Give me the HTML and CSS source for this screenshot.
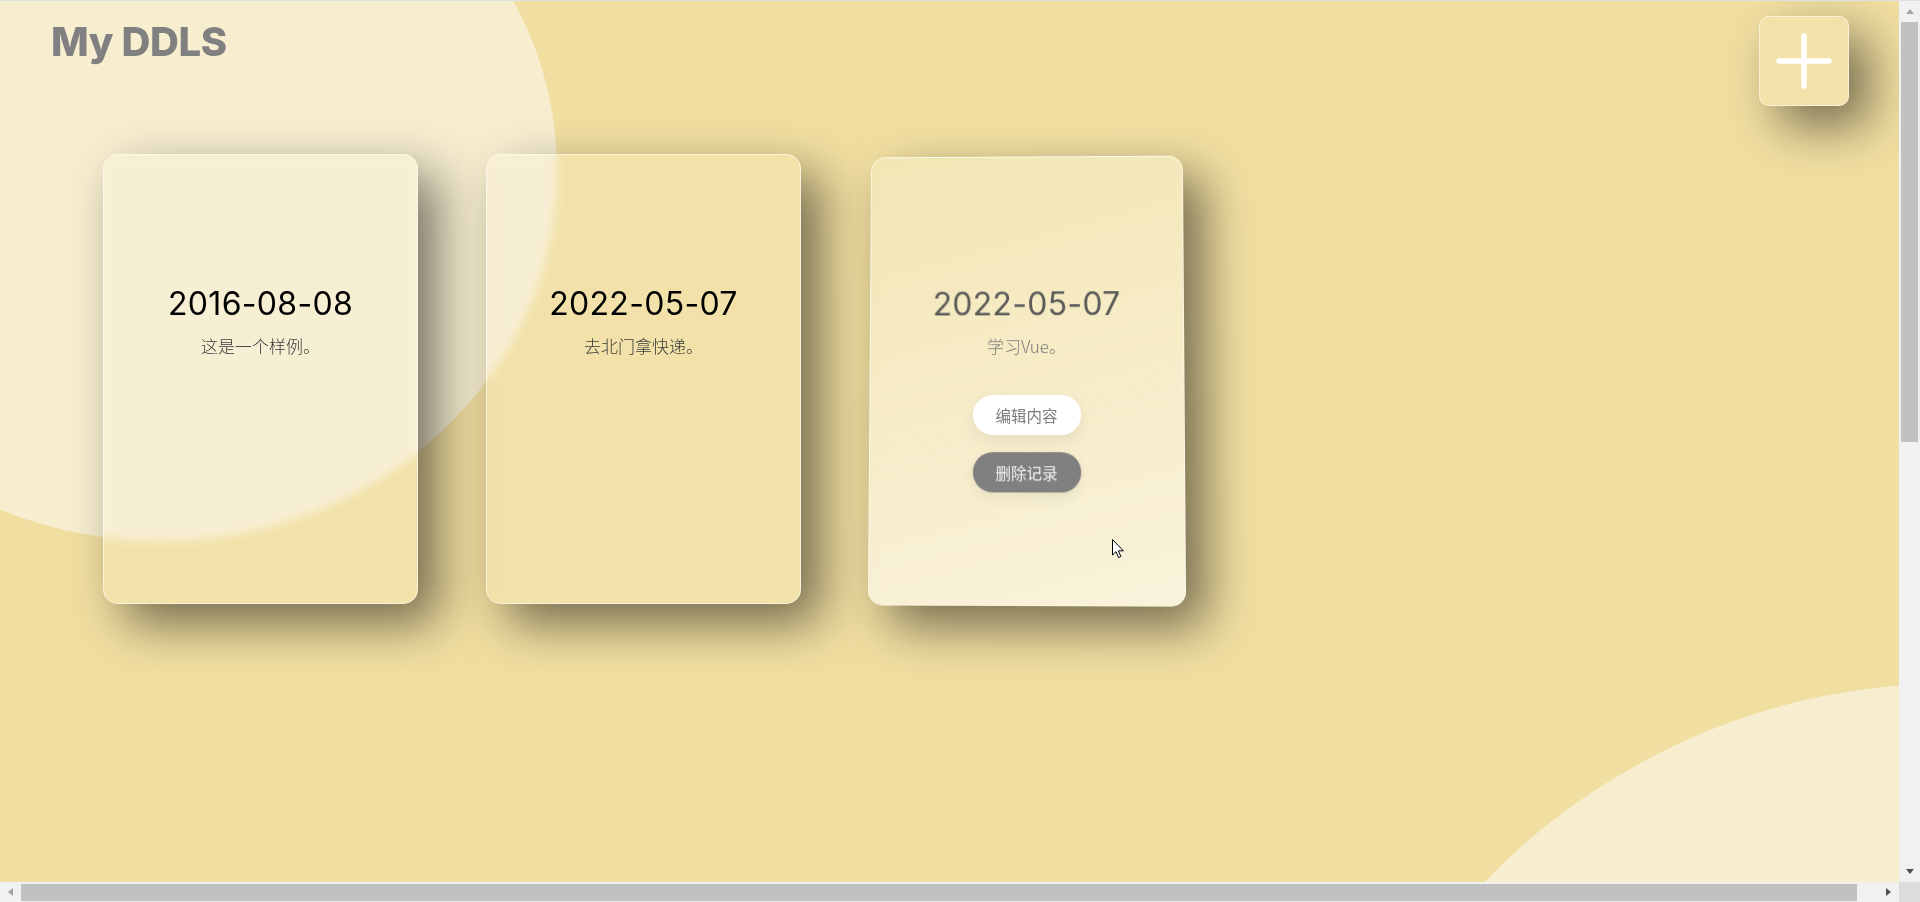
FILE: index.html
```html
<!DOCTYPE html>
<html lang="zh-CN">
<head>
<meta charset="utf-8">
<title>My DDLS</title>
<link rel="stylesheet" href="styles.css">
</head>
<body>
<div class="page">
  <div class="blob blob-tl"></div>
  <div class="blob blob-br"></div>

  <header class="top">
    <h1 class="title">My DDLS</h1>
    <button class="add" aria-label="添加">
      <svg width="56" height="56" viewBox="0 0 56 56">
        <path d="M28 3 V53 M3 28 H53" stroke="#fff" stroke-width="5.5" stroke-linecap="round" fill="none"/>
      </svg>
    </button>
  </header>

  <main class="cards">
    <article class="card">
      <div class="content">
        <h2 class="date">2016-08-08</h2>
        <p class="desc">这是一个样例。</p>
        <div class="actions hidden">
          <button class="btn btn-edit">编辑内容</button>
          <button class="btn btn-del">删除记录</button>
        </div>
      </div>
    </article>
    <article class="card">
      <div class="content">
        <h2 class="date">2022-05-07</h2>
        <p class="desc">去北门拿快递。</p>
        <div class="actions hidden">
          <button class="btn btn-edit">编辑内容</button>
          <button class="btn btn-del">删除记录</button>
        </div>
      </div>
    </article>
    <article class="card card-active">
      <div class="content">
        <h2 class="date">2022-05-07</h2>
        <p class="desc">学习Vue。</p>
        <div class="actions">
          <button class="btn btn-edit">编辑内容</button>
          <button class="btn btn-del">删除记录</button>
        </div>
      </div>
    </article>
  </main>

  <svg class="cursor" width="13" height="20" viewBox="0 0 13 20">
    <path d="M0.5 0.5 L0.5 16 L4 12.6 L6.6 18.6 L8.9 17.6 L6.4 11.8 L11.4 11.8 Z" fill="#fff" stroke="#000" stroke-width="1" stroke-linejoin="miter"/>
  </svg>
</div>

<div class="frame-line" aria-hidden="true"></div>
<div class="sb sb-v" aria-hidden="true">
  <span class="sb-btn"><i class="tri tri-up"></i></span>
  <span class="sb-track"><span class="sb-thumb"></span></span>
  <span class="sb-btn"><i class="tri tri-down"></i></span>
</div>
<div class="sb sb-h" aria-hidden="true">
  <span class="sb-btn"><i class="tri tri-left"></i></span>
  <span class="sb-track"><span class="sb-thumb"></span></span>
  <span class="sb-btn"><i class="tri tri-right"></i></span>
</div>
<div class="sb-corner" aria-hidden="true"></div>
</body>
</html>
```

FILE: styles.css
```css
html, body {
  margin: 0;
  padding: 0;
}

body {
  background: #f1dfa1;
  font-family: Inter, "Noto Sans CJK SC", sans-serif;
  overflow: hidden;
}

.page {
  position: relative;
  width: 100%;
  height: 100vh;
  overflow: hidden;
  background: #f1dfa1;
}

.blob {
  position: absolute;
  border-radius: 50%;
  background: #f7eed0;
  z-index: 0;
}

.blob-tl {
  width: 794px;
  height: 742px;
  left: -237px;
  top: -201px;
}

.blob-br {
  width: 1302px;
  height: 1302px;
  left: 1302px;
  top: 683px;
}

.top {
  position: relative;
  z-index: 2;
  display: flex;
  justify-content: space-between;
  align-items: flex-start;
  padding: 16px 71px 0 51px;
}

.title {
  margin: 2px 0 0 0;
  font-family: Inter, sans-serif;
  font-weight: 800;
  font-size: 40px;
  line-height: 48px;
  color: #808080;
  letter-spacing: -0.4px;
}

.add {
  width: 90px;
  height: 90px;
  padding: 0;
  display: flex;
  align-items: center;
  justify-content: center;
  border-radius: 10px;
  border: 1px solid rgba(255, 255, 255, 0.5);
  background: rgba(255, 255, 255, 0.1);
  backdrop-filter: blur(5px);
  box-shadow: 20px 20px 50px rgba(0, 0, 0, 0.52);
  cursor: pointer;
}

.cards {
  position: relative;
  z-index: 1;
  display: flex;
  gap: 68px;
  margin-top: 48px;
  padding-left: 103px;
}

.card {
  width: 315px;
  height: 450px;
  box-sizing: border-box;
  border-radius: 15px;
  border: 1px solid rgba(255, 255, 255, 0.55);
  background: rgba(255, 255, 255, 0.1);
  backdrop-filter: blur(5px);
  box-shadow: 20px 20px 50px rgba(0, 0, 0, 0.52);
  padding-top: 130px;
}

.card-active {
  background: linear-gradient(165deg, rgba(255, 255, 255, 0.2) 0%, rgba(255, 255, 255, 0.62) 100%);
  transform: perspective(1000px) rotateX(2.6deg) rotateY(-1.2deg);
}

.content {
  display: flex;
  flex-direction: column;
  align-items: center;
}

.date {
  margin: 0;
  font-family: Inter, sans-serif;
  font-weight: 400;
  font-size: 32px;
  line-height: 38px;
  letter-spacing: 0.3px;
  color: #000;
}

.desc {
  margin: 11px 0 0 0;
  font-family: "Noto Sans CJK SC", sans-serif;
  font-weight: 300;
  font-size: 17px;
  line-height: 24px;
  color: #3a3a3a;
}

.actions {
  display: flex;
  flex-direction: column;
  align-items: center;
  gap: 17px;
  margin-top: 37px;
}

.actions.hidden {
  visibility: hidden;
}

.btn {
  width: 108px;
  height: 40px;
  border: none;
  border-radius: 20px;
  font-family: "Noto Sans CJK SC", sans-serif;
  font-size: 15.5px;
  font-weight: 400;
  box-shadow: 0 5px 15px rgba(0, 0, 0, 0.08);
  cursor: pointer;
}

.btn-edit {
  background: #fff;
  color: #7a7a7a;
}

.btn-del {
  background: #808080;
  color: #f2f2f2;
}

.card-active .date {
  color: #595959;
}

.card-active .desc {
  color: #7a7a7a;
}

.cursor {
  position: absolute;
  left: 1112px;
  top: 539px;
  z-index: 5;
}

/* browser frame & classic scrollbars drawn over the page */
.frame-line {
  position: fixed;
  top: 0;
  left: 0;
  right: 0;
  height: 1px;
  background: #dcdfe3;
  z-index: 20;
}

.sb {
  position: fixed;
  display: flex;
  background: #f1f1f1;
  z-index: 20;
}

.sb-v {
  top: 1px;
  right: 0;
  bottom: 20px;
  width: 21px;
  flex-direction: column;
}

.sb-h {
  left: 0;
  bottom: 0;
  right: 21px;
  height: 20px;
  flex-direction: row;
}

.sb-btn {
  display: flex;
  align-items: center;
  justify-content: center;
  flex: 0 0 21px;
}

.sb-track {
  flex: 1;
  display: flex;
}

.sb-v .sb-track {
  flex-direction: column;
  padding: 0 2px;
}

.sb-v .sb-thumb {
  height: 420px;
  background: #c1c1c1;
}

.sb-h .sb-track {
  padding: 2px 0 1px 0;
}

.sb-h .sb-thumb {
  width: 1836px;
  background: #c1c1c1;
}

.sb-corner {
  position: fixed;
  right: 0;
  bottom: 0;
  width: 21px;
  height: 20px;
  background: #dcdcdc;
  z-index: 20;
}

.tri {
  display: block;
  width: 0;
  height: 0;
}

.tri-up {
  border-left: 4.5px solid transparent;
  border-right: 4.5px solid transparent;
  border-bottom: 5px solid #a3a3a3;
}

.tri-down {
  border-left: 4.5px solid transparent;
  border-right: 4.5px solid transparent;
  border-top: 5px solid #505050;
}

.tri-left {
  border-top: 4.5px solid transparent;
  border-bottom: 4.5px solid transparent;
  border-right: 5px solid #a3a3a3;
}

.tri-right {
  border-top: 4.5px solid transparent;
  border-bottom: 4.5px solid transparent;
  border-left: 5px solid #505050;
}
```
